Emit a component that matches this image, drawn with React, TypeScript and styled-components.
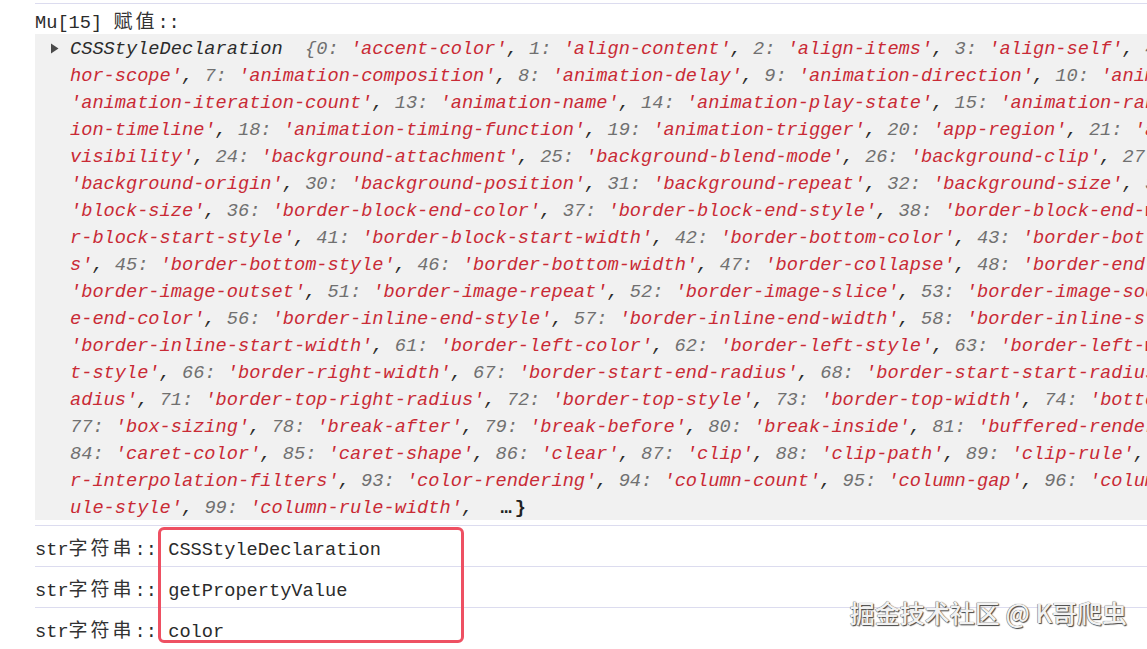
import React from "react";
import styled, { createGlobalStyle } from "styled-components";

const Global = createGlobalStyle`
  html, body { margin: 0; padding: 0; background: #fff; }
  body { font-family: "Liberation Mono", "Noto Sans CJK SC", monospace; overflow: hidden; }
`;

const Page = styled.div`
  position: relative;
  width: 1147px;
  height: 649px;
  overflow: hidden;
  padding: 3px 0 0 35px;
  box-sizing: border-box;
  font-size: 18.67px;
  color: #2b2b2b;
`;

const Header = styled.div`
  border-top: 1px solid #dcdcef;
  height: 30px;
  line-height: 31px;
  white-space: pre;
`;

const Cjk = styled.span`
  font-family: "Noto Sans CJK SC", sans-serif;
  font-size: 19px;
  letter-spacing: 3px;
  color: #333;
`;

const Block = styled.div`
  display: grid;
  grid-template-columns: 35px 1fr;
  background: #f1f1f1;
  font-style: italic;
`;

const Gutter = styled.div`
  display: flex;
  align-items: flex-start;
  padding: 9px 0 0 15px;
`;

const Lines = styled.div`
  overflow: hidden;
  min-width: 0;
`;

const Line = styled.div`
  white-space: pre;
  height: 27px;
  line-height: 31px;
`;

const Str = styled.span`
  color: #c92a35;
`;
const Key = styled.span`
  color: #707070;
`;
const Plain = styled.span`
  color: #2b2b2b;
`;
const Ellipsis = styled.span`
  color: #222;
  letter-spacing: 3px;
  padding-left: 5px;
  font-style: normal;
  font-weight: bold;
`;

const Rows = styled.div`
  position: relative;
  margin-top: 5px;
`;

const Row = styled.div`
  border-top: 1px solid #dcdcef;
  height: 40px;
  line-height: 42px;
  white-space: pre;
`;

const Highlight = styled.div`
  position: absolute;
  left: 123px;
  top: 2px;
  width: 306px;
  height: 116px;
  box-sizing: border-box;
  border: 3px solid #ee5062;
  border-radius: 6px;
`;

const Watermark = styled.div`
  position: absolute;
  right: 20px;
  top: 594px;
  font-family: "Noto Sans CJK SC", sans-serif;
  font-size: 25px;
  font-weight: 500;
  color: #f2f2f2;
  text-shadow: 1px 1px 1px #444, -0.5px -0.5px 0.5px #888, 0 0 1px #666;
  white-space: pre;
`;

type Seg = { k: "s" | "n" | "p"; t: string };

function tokenize(line: string, inStr: boolean): Seg[] {
  const segs: Seg[] = [];
  let cur = "";
  let kind: Seg["k"] = inStr ? "s" : "p";
  const push = () => {
    if (cur) segs.push({ k: kind, t: cur });
    cur = "";
  };
  let i = 0;
  while (i < line.length) {
    const c = line[i];
    if (inStr) {
      cur += c;
      if (c === "'") {
        push();
        inStr = false;
        kind = "p";
      }
      i++;
      continue;
    }
    if (c === "'") {
      push();
      kind = "s";
      inStr = true;
      cur = c;
      i++;
      continue;
    }
    if (/[0-9{]/.test(c)) {
      push();
      kind = "n";
      let j = i;
      while (j < line.length && /[0-9{:]/.test(line[j])) j++;
      cur = line.slice(i, j);
      push();
      kind = "p";
      i = j;
      continue;
    }
    cur += c;
    i++;
  }
  push();
  return segs;
}

const lines: [string, boolean][] = [
  ["{0: 'accent-color', 1: 'align-content', 2: 'align-items', 3: 'align-self', 4: 'alignment-baseline',", false],
  ["hor-scope', 7: 'animation-composition', 8: 'animation-delay', 9: 'animation-direction', 10: 'animation-duration',", true],
  ["'animation-iteration-count', 13: 'animation-name', 14: 'animation-play-state', 15: 'animation-range-end',", false],
  ["ion-timeline', 18: 'animation-timing-function', 19: 'animation-trigger', 20: 'app-region', 21: 'appearance',", true],
  ["visibility', 24: 'background-attachment', 25: 'background-blend-mode', 26: 'background-clip', 27: 'background-color',", true],
  ["'background-origin', 30: 'background-position', 31: 'background-repeat', 32: 'background-size', 33: 'baseline-shift',", false],
  ["'block-size', 36: 'border-block-end-color', 37: 'border-block-end-style', 38: 'border-block-end-width',", false],
  ["r-block-start-style', 41: 'border-block-start-width', 42: 'border-bottom-color', 43: 'border-bottom-left-radius',", true],
  ["s', 45: 'border-bottom-style', 46: 'border-bottom-width', 47: 'border-collapse', 48: 'border-end-end-radius',", true],
  ["'border-image-outset', 51: 'border-image-repeat', 52: 'border-image-slice', 53: 'border-image-source',", false],
  ["e-end-color', 56: 'border-inline-end-style', 57: 'border-inline-end-width', 58: 'border-inline-start-color',", true],
  ["'border-inline-start-width', 61: 'border-left-color', 62: 'border-left-style', 63: 'border-left-width',", false],
  ["t-style', 66: 'border-right-width', 67: 'border-start-end-radius', 68: 'border-start-start-radius',", true],
  ["adius', 71: 'border-top-right-radius', 72: 'border-top-style', 73: 'border-top-width', 74: 'bottom',", true],
  ["77: 'box-sizing', 78: 'break-after', 79: 'break-before', 80: 'break-inside', 81: 'buffered-rendering',", false],
  ["84: 'caret-color', 85: 'caret-shape', 86: 'clear', 87: 'clip', 88: 'clip-path', 89: 'clip-rule', 90: 'color',", false],
  ["r-interpolation-filters', 93: 'color-rendering', 94: 'column-count', 95: 'column-gap', 96: 'column-rule-color',", true],
  ["ule-style', 99: 'column-rule-width',  ", true],
];

function Segs({ segs }: { segs: Seg[] }) {
  return (
    <>
      {segs.map((s, i) =>
        s.k === "s" ? <Str key={i}>{s.t}</Str> : s.k === "n" ? <Key key={i}>{s.t}</Key> : <Plain key={i}>{s.t}</Plain>
      )}
    </>
  );
}

function Triangle() {
  return (
    <svg width="9" height="11" viewBox="0 0 9 11">
      <path d="M1 0.5 L8.5 5.5 L1 10.5 Z" fill="#4a4a4a" />
    </svg>
  );
}

const values = ["CSSStyleDeclaration", "getPropertyValue", "color"];

export default function App() {
  return (
    <>
      <Global />
      <Page>
        <Header>
          Mu[15] <Cjk>赋值</Cjk>::
        </Header>
        <Block>
          <Gutter>
            <Triangle />
          </Gutter>
          <Lines>
            {lines.map(([text, inStr], i) => (
              <Line key={i}>
                {i === 0 && <Plain>CSSStyleDeclaration  </Plain>}
                <Segs segs={tokenize(text, inStr)} />
                {i === lines.length - 1 && <Ellipsis>{"…}"}</Ellipsis>}
              </Line>
            ))}
          </Lines>
        </Block>
        <Rows>
          {values.map((v) => (
            <Row key={v}>
              str<Cjk>字符串</Cjk>:: {v}
            </Row>
          ))}
          <Highlight />
        </Rows>
        <Watermark>掘金技术社区 @ K哥爬虫</Watermark>
      </Page>
    </>
  );
}
